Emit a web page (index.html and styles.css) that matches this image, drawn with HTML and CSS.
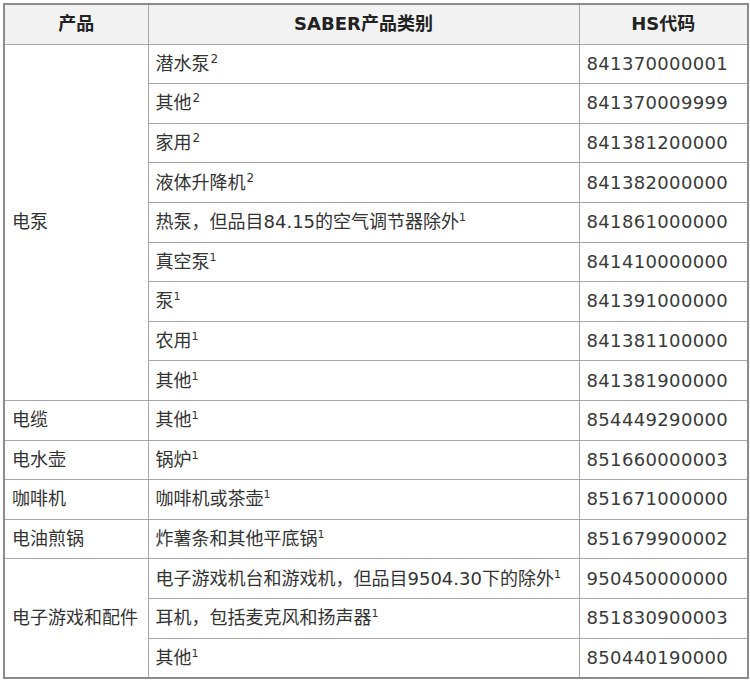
FILE: index.html
```html
<!DOCTYPE html>
<html lang="zh">
<head>
<meta charset="utf-8">
<link rel="stylesheet" href="styles.css">
</head>
<body>
<div class="wrap">
<table class="codes">
  <colgroup>
    <col class="c1"><col class="c2"><col class="c3">
  </colgroup>
  <thead>
    <tr><th>产品</th><th>SABER产品类别</th><th>HS代码</th></tr>
  </thead>
  <tbody>
    <tr><td rowspan="9">电泵</td><td>潜水泵<sup>2</sup></td><td class="code">841370000001</td></tr>
    <tr><td>其他<sup>2</sup></td><td class="code">841370009999</td></tr>
    <tr><td>家用<sup>2</sup></td><td class="code">841381200000</td></tr>
    <tr><td>液体升降机<sup>2</sup></td><td class="code">841382000000</td></tr>
    <tr><td>热泵，但品目84.15的空气调节器除外<sup class="one">1</sup></td><td class="code">841861000000</td></tr>
    <tr><td>真空泵<sup class="one">1</sup></td><td class="code">841410000000</td></tr>
    <tr><td>泵<sup class="one">1</sup></td><td class="code">841391000000</td></tr>
    <tr><td>农用<sup class="one">1</sup></td><td class="code">841381100000</td></tr>
    <tr><td>其他<sup class="one">1</sup></td><td class="code">841381900000</td></tr>
    <tr><td>电缆</td><td>其他<sup class="one">1</sup></td><td class="code">854449290000</td></tr>
    <tr><td>电水壶</td><td>锅炉<sup class="one">1</sup></td><td class="code">851660000003</td></tr>
    <tr><td>咖啡机</td><td>咖啡机或茶壶<sup class="one">1</sup></td><td class="code">851671000000</td></tr>
    <tr><td>电油煎锅</td><td>炸薯条和其他平底锅<sup class="one">1</sup></td><td class="code">851679900002</td></tr>
    <tr><td rowspan="3">电子游戏和配件</td><td>电子游戏机台和游戏机，但品目9504.30下的除外<sup class="one">1</sup></td><td class="code">950450000000</td></tr>
    <tr><td>耳机，包括麦克风和扬声器<sup class="one">1</sup></td><td class="code">851830900003</td></tr>
    <tr><td>其他<sup class="one">1</sup></td><td class="code">850440190000</td></tr>
  </tbody>
</table>
</div>
</body>
</html>
```

FILE: styles.css
```css
html, body {
  margin: 0;
  padding: 0;
  background: #ffffff;
}
.wrap {
  padding: 3px 3px 0 3px;
}
.codes {
  width: 744px;
  border-collapse: collapse;
  table-layout: fixed;
  border: 2px solid #8c8c8c;
  font-family: "DejaVu Sans", "Noto Sans CJK SC", sans-serif;
  font-size: 18px;
  color: #333333;
}
.c1 { width: 144px; }
.c2 { width: 431px; }
.c3 { width: 169px; }
.codes th, .codes td {
  border: 1px solid #a6a6a6;
  padding: 0 0 0 7px;
  height: 38.6px;
  white-space: nowrap;
  text-align: left;
  line-height: 22px;
}
.codes th {
  background: #f2f2f2;
  font-weight: bold;
  text-align: center;
  padding: 0;
  color: #222222;
}
.codes .code {
  letter-spacing: 0.35px;
  color: #3a3a3a;
}
.codes sup {
  font-size: 12px;
  line-height: 0;
  vertical-align: 7px;
  margin-left: 1px;
}
.codes sup.one {
  font-size: 11px;
  margin-left: 0;
}
```
